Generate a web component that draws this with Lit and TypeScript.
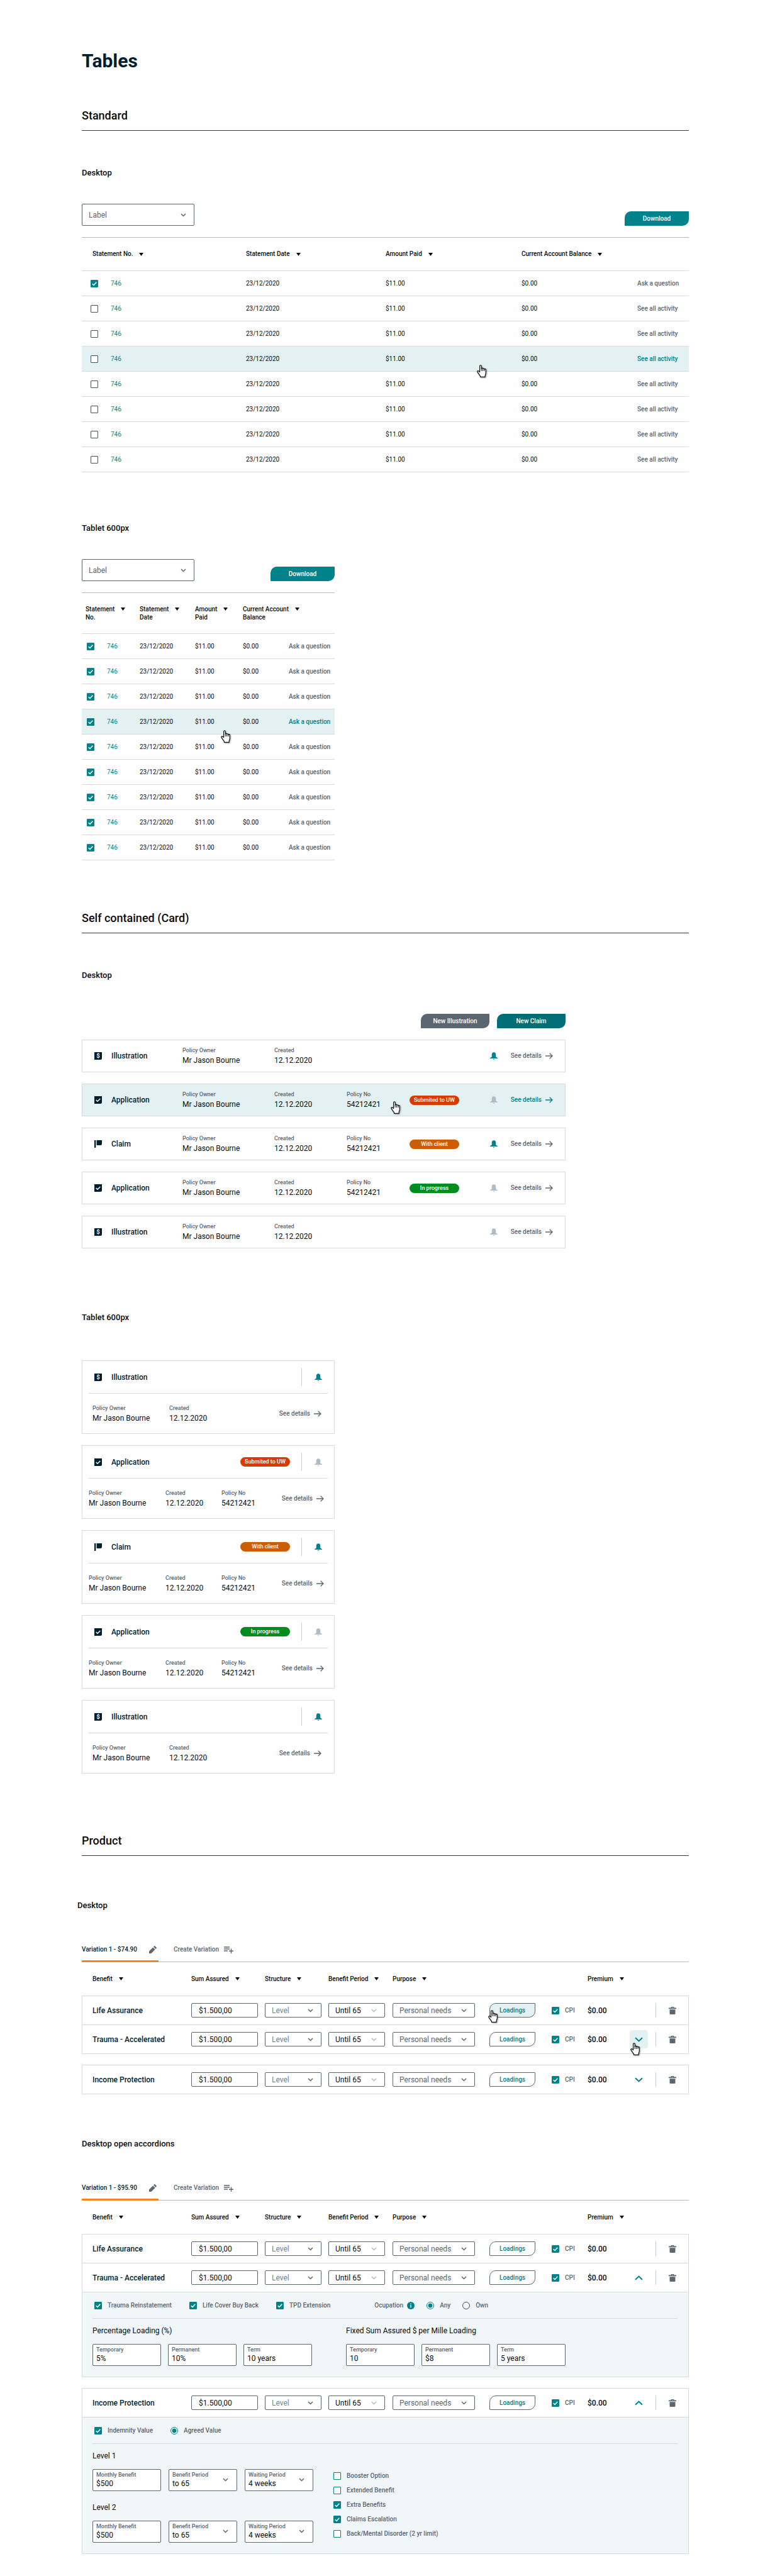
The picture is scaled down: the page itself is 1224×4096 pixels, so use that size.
import { LitElement, html, css, svg, nothing, type TemplateResult } from "lit";
import { customElement, property } from "lit/decorators.js";
import { classMap } from "lit/directives/class-map.js";

/* ---------- icons ---------- */

const icons: Record<string, TemplateResult> = {
  chevron: svg`<svg class="chevron" viewBox="0 0 9 6" width="9" height="6" aria-hidden="true"><path d="M1 1l3.5 3.5L8 1" fill="none" stroke="currentColor" stroke-width="1.5"/></svg>`,
  caret: svg`<svg viewBox="0 0 7 5" width="7" height="5" aria-hidden="true"><path d="M0 0h7L3.500 5z" fill="currentColor"/></svg>`,
  tick: svg`<svg class="tick" viewBox="0 0 12 12" width="12" height="12" aria-hidden="true"><path d="M2.700 6.200l2.300 2.300 4.300-4.700" fill="none" stroke="#fff" stroke-width="1.500"/></svg>`,
  expand: svg`<svg viewBox="0 0 13 8" width="13" height="8" aria-hidden="true"><path d="M1 1.200l5.500 5.200L12 1.200" fill="none" stroke="currentColor" stroke-width="2"/></svg>`,
  collapse: svg`<svg viewBox="0 0 13 8" width="13" height="8" aria-hidden="true"><path d="M1 6.800l5.500-5.200L12 6.800" fill="none" stroke="currentColor" stroke-width="2"/></svg>`,
  arrow: svg`<svg viewBox="0 0 12 10" width="12" height="10" aria-hidden="true"><path d="M0 5h10.800M6.700.700L11 5 6.700 9.300" fill="none" stroke="currentColor" stroke-width="1.300"/></svg>`,
  bell: svg`<svg viewBox="0 0 24 24" width="12" height="12" aria-hidden="true"><path d="M12 .500c-4 0-6.500 2.700-6.500 6.500v6.500c0 2-1.500 3.200-5.500 5V20h24v-1.500c-4-1.800-5.500-3-5.500-5V7c0-3.800-2.500-6.500-6.500-6.500zM9 21.500h6c-.4 1.500-1.500 2.300-3 2.300s-2.600-.8-3-2.300z" fill="currentColor"/></svg>`,
  trash: svg`<svg viewBox="0 0 12 12" width="12" height="12" aria-hidden="true"><path d="M3.600 1.600V0h4.800v1.600H12V3.200H0V1.600zM5 1.600h2V1H5zM1.500 4.200h9V10.800a1.200 1.200 0 0 1-1.200 1.200H2.700a1.200 1.200 0 0 1-1.200-1.200z" fill="currentColor"/></svg>`,
  pencil: svg`<svg viewBox="0 0 12 12" width="12" height="12" aria-hidden="true"><path d="M0 12V8.600L6.200 2.400l3.400 3.400L3.600 11.800q-.2.200-.6.200zM7 1.600L8.300.300q.5-.5 1 0l2.400 2.400q.5.500 0 1L10.400 5z" fill="currentColor"/></svg>`,
  listAdd: svg`<svg viewBox="0 0 15 11" width="15" height="11" aria-hidden="true"><path d="M0 1h9M0 4h9M0 7h6M11.500 3.500V11M8 7.200h7" fill="none" stroke="currentColor" stroke-width="1.400"/></svg>`,
  info: svg`<svg viewBox="0 0 12 12" width="12" height="12" role="img" aria-label="More about occupation"><circle cx="6" cy="6" r="6" fill="#00828a"/><path d="M6 2.600v1.500M6 5v4.400" stroke="#fff" stroke-width="1.300"/></svg>`,
  illustration: svg`<svg viewBox="0 0 12 12" width="12" height="12" aria-hidden="true"><path d="M0 0h12v9.500a2.500 2.500 0 0 1-2.500 2.500H0z" fill="currentColor"/><text x="6" y="9.200" text-anchor="middle" font-size="9" font-weight="700" fill="#fff">$</text></svg>`,
  application: svg`<svg viewBox="0 0 12 12" width="12" height="12" aria-hidden="true"><path d="M0 0h12v9.500a2.500 2.500 0 0 1-2.500 2.500H0z" fill="currentColor"/><path d="M2.700 6l2.300 2.300 4.300-4.300" fill="none" stroke="#fff" stroke-width="1.500"/></svg>`,
  claim: svg`<svg viewBox="0 0 12 12" width="12" height="12" aria-hidden="true"><path d="M0 0h2.300v12H0zM3.600 0H12v5.400A2.500 2.500 0 0 1 9.500 7.900H3.600z" fill="currentColor"/></svg>`,
  hand: svg`<svg viewBox="0 0 16 21" width="16" height="21" aria-hidden="true"><path d="M4.600 11.500V2.100a1.300 1.300 0 0 1 2.600 0V6.200a1.200 1.200 0 0 1 2.400.3v.3a1.200 1.200 0 0 1 2.400.3v.5a1.150 1.150 0 0 1 2.300.4v5.200c0 1.600-1.200 3-1.200 4.600v1.500H5.500v-1.300c-1.200-2-2.400-3.200-4.400-6.300-.8-1.500.7-2.500 1.700-1.700z" fill="#fff" stroke="#111" stroke-width="1.200" stroke-linejoin="round"/><path d="M7.200 6v4M9.600 6.800v3.200M12 7.500v2.700" stroke="#111" stroke-width="1"/></svg>`,
};

const hand = (spot: string) => html`<span class="hand ${spot}">${icons.hand}</span>`;

/* ---------- shared styles ---------- */

const base = css`
  :host {
    display: block;
    --teal: #00828a;
    --ink: #001f2e;
    --slate: #5c6670;
    --line: #d6dce1;
    --tint: #e4f1f2;
    color: #0b0b0b;
    font: 400 10px/14px Roboto, "Liberation Sans", sans-serif;
  }
  *,
  *::before {
    box-sizing: border-box;
  }
  svg {
    display: block;
    flex: none;
  }
  button,
  input,
  select {
    margin: 0;
    font: inherit;
    color: inherit;
  }
  button {
    padding: 0;
    border: 0;
    background: none;
    cursor: pointer;
  }
  a {
    color: inherit;
    text-decoration: none;
  }
  table {
    width: 100%;
    border-collapse: separate;
    border-spacing: 0;
    table-layout: fixed;
  }
  th,
  td {
    padding: 0;
    text-align: left;
    font-weight: 400;
  }
  .hand {
    position: absolute;
    z-index: 1;
    filter: drop-shadow(1px 1px 1px rgba(0, 0, 0, 0.4));
    pointer-events: none;
  }
  .sort {
    display: flex;
    align-items: center;
    gap: 10px;
    font-weight: 500;
    text-align: left;
    white-space: nowrap;
  }
  .solid {
    height: 23px;
    border-radius: 10px 1px;
    background: var(--teal);
    color: #fff;
    font-weight: 500;
  }
  .check {
    display: flex;
    align-items: center;
    gap: 9px;
    color: var(--slate);
    font-weight: 500;
    white-space: nowrap;
  }
  .box {
    display: grid;
    flex: none;
    width: 12px;
    height: 12px;
  }
  .box > * {
    grid-area: 1 / 1;
  }
  .box input {
    appearance: none;
    width: 12px;
    height: 12px;
    border: 1px solid #46505a;
    border-radius: 1px;
    background: #fff;
  }
  .box.accent input {
    border-color: var(--teal);
  }
  .box input:checked {
    border-color: var(--teal);
    background: var(--teal);
  }
  .box .tick {
    visibility: hidden;
    pointer-events: none;
  }
  .box input:checked + .tick {
    visibility: visible;
  }
  .box input[type="radio"] {
    border-radius: 50%;
    background: transparent;
  }
  .box input[type="radio"]:checked {
    background: radial-gradient(circle, var(--teal) 3px, #fff 4px);
  }
  .pick {
    display: grid;
    align-items: center;
    color: var(--slate);
  }
  .pick > * {
    grid-area: 1 / 1;
  }
  .pick select {
    appearance: none;
    width: 100%;
    min-width: 0;
    height: 23px;
    padding: 0 20px 0 10px;
    border: 1px solid var(--slate);
    border-radius: 2px;
    background: #fff;
    font-size: 12px;
  }
  .pick .chevron {
    justify-self: end;
    margin-right: 13px;
    pointer-events: none;
  }
`;

const tickBox = (checked: boolean, label: string, accent = false) =>
  html`<span class=${classMap({ box: true, accent })}
    ><input type="checkbox" .checked=${checked} aria-label=${label} />${icons.tick}</span
  >`;

const check = (text: string, checked: boolean, accent = false) =>
  html`<label class="check"
    ><span class=${classMap({ box: true, accent })}
      ><input type="checkbox" .checked=${checked} />${icons.tick}</span
    >${text}</label
  >`;

const radio = (text: string, name: string, checked: boolean) =>
  html`<label class="check"
    ><span class="box"><input type="radio" name=${name} .checked=${checked} /></span>${text}</label
  >`;

const sort = (text: TemplateResult | string) =>
  html`<button class="sort" type="button"><span>${text}</span>${icons.caret}</button>`;

/* ---------- statement table ---------- */

interface Statement {
  checked: boolean;
  action: string;
  hover?: boolean;
}

@customElement("statement-table")
class StatementTable extends LitElement {
  @property({ type: Boolean, reflect: true }) compact = false;
  @property({ attribute: false }) rows: Statement[] = [];

  static styles = [
    base,
    css`
      .bar {
        display: flex;
        justify-content: space-between;
        align-items: flex-end;
        margin-bottom: 18px;
      }
      .bar .pick {
        width: 179px;
      }
      .bar select {
        height: 35px;
      }
      .bar .solid {
        width: 102px;
      }
      table {
        border-top: 1px solid #b3bdc6;
      }
      th {
        height: 53px;
        border-bottom: 1px solid var(--line);
      }
      td {
        height: 40px;
        border-bottom: 1px solid var(--line);
      }
      .c-date {
        width: 222px;
      }
      .c-paid {
        width: 216px;
      }
      .c-balance {
        width: 184px;
      }
      .c-action {
        width: 82px;
      }
      th:first-child {
        padding-left: 17px;
      }
      .first {
        display: flex;
        align-items: center;
        gap: 20px;
        padding-left: 14px;
      }
      .first a {
        color: var(--teal);
      }
      .paid {
        position: relative;
      }
      .action {
        color: var(--slate);
        font-weight: 500;
        white-space: nowrap;
      }
      .hover td {
        background: var(--tint);
      }
      .hover .action {
        color: var(--teal);
      }
      .on-row {
        left: 145px;
        top: 29px;
      }
      :host([compact]) th {
        height: 65px;
      }
      :host([compact]) .sort {
        align-items: flex-start;
        line-height: 13px;
      }
      :host([compact]) .sort svg {
        margin-top: 4px;
      }
      :host([compact]) .c-date {
        width: 88px;
      }
      :host([compact]) .c-paid {
        width: 76px;
      }
      :host([compact]) .c-balance {
        width: 73px;
      }
      :host([compact]) .c-action {
        width: 73px;
      }
      :host([compact]) th:first-child {
        padding-left: 6px;
      }
      :host([compact]) .first {
        padding-left: 8px;
      }
      :host([compact]) .on-row {
        left: 41px;
        top: 33px;
      }
    `,
  ];

  render() {
    const titles = this.compact
      ? [html`Statement<br />No.`, html`Statement<br />Date`, html`Amount<br />Paid`, html`Current Account<br />Balance`]
      : ["Statement No.", "Statement Date", "Amount Paid", "Current Account Balance"];
    return html`
      <div class="bar">
        <span class="pick">
          <select aria-label="Label"><option>Label</option></select>${icons.chevron}
        </span>
        <button class="solid" type="button">Download</button>
      </div>
      <table>
        <colgroup>
          <col /><col class="c-date" /><col class="c-paid" /><col class="c-balance" /><col class="c-action" />
        </colgroup>
        <thead>
          <tr>
            ${titles.map((t, i) => html`<th colspan=${i === 3 ? 2 : 1} scope="col">${sort(t)}</th>`)}
          </tr>
        </thead>
        <tbody>
          ${this.rows.map(
            (r) => html`<tr class=${classMap({ hover: !!r.hover })}>
              <td><div class="first">${tickBox(r.checked, "Select statement")}<a href="#statement">746</a></div></td>
              <td>23/12/2020</td>
              <td class="paid">$11.00${r.hover ? hand("on-row") : nothing}</td>
              <td>$0.00</td>
              <td><a class="action" href="#activity">${r.action}</a></td>
            </tr>`
          )}
        </tbody>
      </table>
    `;
  }
}

/* ---------- policy cards ---------- */

interface Policy {
  kind: "Illustration" | "Application" | "Claim";
  status?: string;
  tone?: string;
  alert: boolean;
  hover?: boolean;
}

@customElement("policy-cards")
class PolicyCards extends LitElement {
  @property({ type: Boolean, reflect: true }) compact = false;
  @property({ attribute: false }) items: Policy[] = [];

  static styles = [
    base,
    css`
      .bar {
        display: flex;
        justify-content: flex-end;
        gap: 12px;
        margin-bottom: 18px;
      }
      .bar .solid {
        width: 109px;
        background: #006f75;
      }
      .bar .solid.grey {
        background: var(--slate);
      }
      .cards {
        display: grid;
        gap: 18px;
      }
      .card {
        border: 1px solid var(--line);
      }
      .row {
        display: grid;
        grid-template-columns: 27px 113px 146px 115px 100px 1fr 33px auto;
        align-items: center;
        height: 52px;
        padding: 0 19px;
      }
      .kind {
        color: var(--ink);
        font-size: 12px;
        font-weight: 500;
      }
      .icon {
        color: var(--ink);
      }
      .fact {
        display: grid;
        gap: 3px;
        margin: 0;
      }
      .fact dt {
        color: var(--slate);
        font-size: 9px;
        font-weight: 500;
        line-height: 11px;
      }
      .fact dd {
        margin: 0;
        font-size: 12px;
        line-height: 14px;
        white-space: nowrap;
      }
      .number {
        position: relative;
      }
      .pill {
        display: block;
        width: 79px;
        border-radius: 8px;
        color: #fff;
        font-size: 9px;
        font-weight: 500;
        line-height: 15px;
        text-align: center;
        white-space: nowrap;
      }
      .red {
        background: #d93a00;
      }
      .orange {
        background: #cb5d04;
      }
      .green {
        background: #008c1f;
      }
      .bell {
        color: #b1bbc5;
      }
      .bell.on {
        color: var(--teal);
      }
      .details {
        display: flex;
        align-items: center;
        gap: 6px;
        color: var(--slate);
        font-weight: 500;
        white-space: nowrap;
      }
      .hover {
        background: var(--tint);
      }
      .hover .details {
        color: var(--teal);
      }
      .on-card {
        left: 70px;
        top: 16px;
      }
      .head {
        display: flex;
        align-items: center;
        height: 51px;
        padding: 0 19px;
      }
      .head .icon {
        width: 27px;
      }
      .head .kind {
        flex: 1;
      }
      .head .bell {
        display: flex;
        align-items: center;
        height: 29px;
        margin-left: 18px;
        padding-left: 20px;
        border-left: 1px solid #c6ced6;
      }
      .foot {
        display: grid;
        grid-template-columns: 122px 1fr auto;
        align-items: center;
        height: 64px;
        margin: 0 10px;
        padding: 0 10px 0 6px;
        border-top: 1px solid var(--line);
      }
      .foot.wide {
        grid-template-columns: 122px 89px 1fr auto;
        padding: 0 6px 0 0;
      }
    `,
  ];

  private fact(term: string, value: string) {
    return html`<dl class="fact"><dt>${term}</dt><dd>${value}</dd></dl>`;
  }

  private bell(on: boolean) {
    return html`<button class=${classMap({ bell: true, on })} type="button" aria-label="Notifications">${icons.bell}</button>`;
  }

  private details() {
    return html`<a class="details" href="#details">See details ${icons.arrow}</a>`;
  }

  private pill(p: Policy) {
    return p.status ? html`<span class="pill ${p.tone}">${p.status}</span>` : nothing;
  }

  private wide(p: Policy) {
    return html`<article class=${classMap({ card: true, row: true, hover: !!p.hover })}>
      <span class="icon">${icons[p.kind.toLowerCase()]}</span>
      <span class="kind">${p.kind}</span>
      ${this.fact("Policy Owner", "Mr Jason Bourne")} ${this.fact("Created", "12.12.2020")}
      <div class="number">${p.status ? this.fact("Policy No", "54212421") : nothing}${p.hover ? hand("on-card") : nothing}</div>
      <div>${this.pill(p)}</div>
      ${this.bell(p.alert)} ${this.details()}
    </article>`;
  }

  private narrow(p: Policy) {
    return html`<article class="card">
      <div class="head">
        <span class="icon">${icons[p.kind.toLowerCase()]}</span>
        <span class="kind">${p.kind}</span>
        ${this.pill(p)} ${this.bell(p.alert)}
      </div>
      <div class=${classMap({ foot: true, wide: !!p.status })}>
        ${this.fact("Policy Owner", "Mr Jason Bourne")} ${this.fact("Created", "12.12.2020")}
        ${p.status ? this.fact("Policy No", "54212421") : nothing} ${this.details()}
      </div>
    </article>`;
  }

  render() {
    return html`
      ${this.compact
        ? nothing
        : html`<div class="bar">
            <button class="solid grey" type="button">New Illustration</button>
            <button class="solid" type="button">New Claim</button>
          </div>`}
      <div class="cards">${this.items.map((p) => (this.compact ? this.narrow(p) : this.wide(p)))}</div>
    `;
  }
}

/* ---------- product table ---------- */

@customElement("product-table")
class ProductTable extends LitElement {
  @property() total = "";
  @property({ type: Boolean }) open = false;

  static styles = [
    base,
    css`
      .tabs {
        display: flex;
        box-shadow: inset 0 -1px #b3bdc6;
      }
      .tab {
        display: flex;
        align-items: center;
        height: 30px;
        padding-bottom: 7px;
        border-bottom: 3px solid transparent;
        color: var(--slate);
        font-weight: 500;
        white-space: nowrap;
      }
      .tab.current {
        gap: 19px;
        padding-right: 3px;
        border-color: #fa811e;
      }
      .tab.current span {
        color: var(--ink);
      }
      .tab.create {
        gap: 8px;
        margin-left: 24px;
      }
      .c-sum {
        width: 117px;
      }
      .c-structure {
        width: 101px;
      }
      .c-period {
        width: 102px;
      }
      .c-purpose {
        width: 154px;
      }
      .c-loading {
        width: 99px;
      }
      .c-cpi {
        width: 57px;
      }
      .c-premium {
        width: 67px;
      }
      .c-toggle {
        width: 41px;
      }
      .c-delete {
        width: 53px;
      }
      thead th {
        height: 53px;
      }
      thead th:first-child {
        padding-left: 17px;
      }
      .item > * {
        position: relative;
        height: 46px;
        border-top: 1px solid var(--line);
      }
      .item > :first-child {
        padding-left: 16px;
        border-left: 1px solid var(--line);
        color: var(--ink);
        font-size: 12px;
        font-weight: 500;
      }
      .item > :last-child {
        border-right: 1px solid var(--line);
      }
      .item.last > * {
        height: 47px;
        border-bottom: 1px solid var(--line);
      }
      .gap td {
        height: 17px;
      }
      .sum,
      .structure {
        padding-right: 11px;
      }
      .period {
        padding-right: 12px;
      }
      .purpose {
        padding-right: 23px;
      }
      .sum input {
        display: block;
        width: 100%;
        height: 23px;
        padding: 0 11px;
        border: 1px solid var(--slate);
        border-radius: 2px;
        font-size: 12px;
      }
      .structure select {
        color: #78828c;
      }
      .period select {
        color: #0b0b0b;
      }
      .period .chevron {
        color: #b1bbc5;
      }
      .outline {
        display: block;
        width: 73px;
        height: 23px;
        border: 1px solid var(--slate);
        border-radius: 10px 1px;
        background: #fff;
        color: var(--teal);
        font-weight: 500;
      }
      .outline.hover {
        background: var(--tint);
      }
      .premium {
        font-size: 12px;
        font-weight: 500;
      }
      .toggle {
        display: grid;
        place-items: center;
        width: 29px;
        height: 29px;
        border-radius: 4px;
        color: var(--teal);
      }
      .toggle.hover {
        background: var(--tint);
      }
      .bin {
        display: flex;
        align-items: center;
        height: 23px;
        padding-left: 20px;
        border-left: 1px solid #c6ced6;
        color: var(--slate);
      }
      .on-loading {
        left: -2px;
        top: 22px;
      }
      .on-toggle {
        left: 1px;
        top: 28px;
      }
      .panel {
        padding: 0 17px 17px 16px;
        border: 1px solid var(--line);
        background: #f1f6f9;
      }
      .options {
        display: flex;
        align-items: center;
        gap: 28px;
        height: 42px;
        padding: 0 3px;
        border-bottom: 1px solid var(--line);
      }
      .occupation {
        display: flex;
        align-items: center;
        gap: 19px;
        margin-left: 42px;
      }
      .occupation .name {
        display: flex;
        align-items: center;
        gap: 6px;
        color: var(--slate);
        font-weight: 500;
      }
      .columns {
        display: flex;
        gap: 54px;
        padding-top: 11px;
      }
      .columns.levels {
        gap: 32px;
      }
      .stack {
        display: grid;
        gap: 18px;
      }
      h4 {
        margin: 0 0 13px;
        font-size: 12px;
        font-weight: 400;
        line-height: 16px;
      }
      .fields {
        display: flex;
        gap: 11px;
      }
      .levels .fields {
        gap: 12px;
      }
      .field {
        display: grid;
        grid-template-columns: 1fr auto;
        grid-template-rows: 11px 14px;
        row-gap: 1px;
        width: 109px;
        height: 35px;
        padding: 3px 13px 0 5px;
        border: 1px solid var(--slate);
        border-radius: 2px;
        background: #fff;
        color: var(--slate);
        font-size: 9px;
        font-weight: 500;
        line-height: 11px;
        white-space: nowrap;
      }
      .field input,
      .field select {
        grid-area: 2 / 1;
        appearance: none;
        width: 100%;
        min-width: 0;
        height: 14px;
        padding: 0;
        border: 0;
        background: none;
        color: #0b0b0b;
        font-size: 12px;
        font-weight: 400;
        line-height: 14px;
      }
      .field .chevron {
        grid-area: 1 / 2 / 3 / 3;
        align-self: center;
      }
      .list {
        display: grid;
        grid-auto-rows: 23px;
        align-content: start;
        padding-top: 28px;
      }
    `,
  ];

  private pick(label: string, value: string) {
    return html`<span class="pick"><select aria-label=${label}><option>${value}</option></select>${icons.chevron}</span>`;
  }

  private item(name: string, o: { last?: boolean; toggle?: boolean; hotLoading?: boolean; hotToggle?: boolean }) {
    return html`<tr class=${classMap({ item: true, last: !!o.last })}>
      <th scope="row">${name}</th>
      <td class="sum"><input type="text" aria-label="Sum Assured" .value=${"$1.500,00"} /></td>
      <td class="structure">${this.pick("Structure", "Level")}</td>
      <td class="period">${this.pick("Benefit Period", "Until 65")}</td>
      <td class="purpose">${this.pick("Purpose", "Personal needs")}</td>
      <td>
        <button class=${classMap({ outline: true, hover: !!o.hotLoading })} type="button">Loadings</button>${o.hotLoading
          ? hand("on-loading")
          : nothing}
      </td>
      <td>${check("CPI", true)}</td>
      <td class="premium">$0.00</td>
      <td>
        ${o.toggle
          ? html`<button class=${classMap({ toggle: true, hover: !!o.hotToggle })} type="button" aria-label="Toggle details">
              ${this.open ? icons.collapse : icons.expand}
            </button>`
          : nothing}${o.hotToggle ? hand("on-toggle") : nothing}
      </td>
      <td><button class="bin" type="button" aria-label="Delete">${icons.trash}</button></td>
    </tr>`;
  }

  private field(label: string, value: string, choice = false) {
    return html`<label class="field"
      >${label}${choice
        ? html`<select><option>${value}</option></select>${icons.chevron}`
        : html`<input type="text" .value=${value} />`}</label
    >`;
  }

  private loading(title: string, values: string[]) {
    return html`<section>
      <h4>${title}</h4>
      <div class="fields">${["Temporary", "Permanent", "Term"].map((l, i) => this.field(l, values[i]))}</div>
    </section>`;
  }

  private level(title: string) {
    return html`<section>
      <h4>${title}</h4>
      <div class="fields">
        ${this.field("Monthly Benefit", "$500")} ${this.field("Benefit Period", "to 65", true)}
        ${this.field("Waiting Period", "4 weeks", true)}
      </div>
    </section>`;
  }

  private traumaPanel() {
    return html`<tr>
      <td class="panel" colspan="10">
        <div class="options">
          ${check("Trauma Reinstatement", true)} ${check("Life Cover Buy Back", true)} ${check("TPD Extension", true)}
          <div class="occupation" role="radiogroup" aria-label="Ocupation">
            <span class="name">Ocupation ${icons.info}</span>
            ${radio("Any", "occupation", true)} ${radio("Own", "occupation", false)}
          </div>
        </div>
        <div class="columns">
          ${this.loading("Percentage Loading (%)", ["5%", "10%", "10 years"])}
          ${this.loading("Fixed Sum Assured $ per Mille Loading", ["10", "$8", "5 years"])}
        </div>
      </td>
    </tr>`;
  }

  private incomePanel() {
    return html`<tr>
      <td class="panel" colspan="10">
        <div class="options">${check("Indemnity Value", true)} ${radio("Agreed Value", "value", true)}</div>
        <div class="columns levels">
          <div class="stack">${this.level("Level 1")} ${this.level("Level 2")}</div>
          <div class="list">
            ${check("Booster Option", false, true)} ${check("Extended Benefit", false, true)}
            ${check("Extra Benefits", true, true)} ${check("Claims Escalation", true, true)}
            ${check("Back/Mental Disorder (2 yr limit)", false, true)}
          </div>
        </div>
      </td>
    </tr>`;
  }

  render() {
    return html`
      <nav class="tabs">
        <a class="tab current" href="#variation-1"><span>Variation 1 - ${this.total}</span>${icons.pencil}</a>
        <a class="tab create" href="#create">Create Variation ${icons.listAdd}</a>
      </nav>
      <table>
        <colgroup>
          <col /><col class="c-sum" /><col class="c-structure" /><col class="c-period" /><col class="c-purpose" />
          <col class="c-loading" /><col class="c-cpi" /><col class="c-premium" /><col class="c-toggle" /><col class="c-delete" />
        </colgroup>
        <thead>
          <tr>
            ${["Benefit", "Sum Assured", "Structure", "Benefit Period", "Purpose"].map((t) => html`<th scope="col">${sort(t)}</th>`)}
            <td colspan="2"></td>
            <th scope="col">${sort("Premium")}</th>
            <td colspan="2"></td>
          </tr>
        </thead>
        <tbody>
          ${this.item("Life Assurance", { hotLoading: !this.open })}
          ${this.item("Trauma - Accelerated", { last: !this.open, toggle: true, hotToggle: !this.open })}
          ${this.open ? this.traumaPanel() : nothing}
        </tbody>
        <tbody>
          <tr class="gap"><td colspan="10"></td></tr>
          ${this.item("Income Protection", { last: !this.open, toggle: true })} ${this.open ? this.incomePanel() : nothing}
        </tbody>
      </table>
    `;
  }
}

/* ---------- page ---------- */

const desktopRows: Statement[] = Array.from({ length: 8 }, (_, i) => ({
  checked: i === 0,
  action: i === 0 ? "Ask a question" : "See all activity",
  hover: i === 3,
}));

const tabletRows: Statement[] = Array.from({ length: 9 }, (_, i) => ({
  checked: true,
  action: "Ask a question",
  hover: i === 3,
}));

const policies: Policy[] = [
  { kind: "Illustration", alert: true },
  { kind: "Application", status: "Submited to UW", tone: "red", alert: false, hover: true },
  { kind: "Claim", status: "With client", tone: "orange", alert: true },
  { kind: "Application", status: "In progress", tone: "green", alert: false },
  { kind: "Illustration", alert: false },
];

const tabletPolicies: Policy[] = policies.map((p, i) => (i === 4 ? { ...p, alert: true } : p));

@customElement("app-root")
class AppRoot extends LitElement {
  static styles = [
    base,
    css`
      :host {
        background: #fff;
      }
      main {
        padding: 79px 129px 35px 130px;
      }
      h1,
      h2,
      h3 {
        margin: 0;
      }
      h1 {
        color: var(--ink);
        font-size: 30px;
        font-weight: 700;
        line-height: 36px;
      }
      h2 {
        margin-top: 57px;
        padding-bottom: 11px;
        border-bottom: 1px solid #3a3a3a;
        font-size: 18px;
        font-weight: 500;
        line-height: 24px;
      }
      h3 {
        margin: 57px 0 39px;
        font-size: 13px;
        font-weight: 500;
        line-height: 20px;
      }
      .again {
        margin-top: 79px;
      }
      .cards-section {
        margin-top: 80px;
      }
      .cards-title {
        margin-bottom: 51px;
      }
      .tablet-cards {
        margin: 100px 0 58px;
      }
      .product-section {
        margin-top: 95px;
      }
      .product-title {
        margin: 69px 0 50px;
      }
      .outdent {
        margin-left: -7px;
      }
      .tablet {
        max-width: 402px;
      }
      .medium {
        max-width: 769px;
      }
    `,
  ];

  render() {
    return html`<main>
      <h1>Tables</h1>

      <h2>Standard</h2>
      <h3>Desktop</h3>
      <statement-table .rows=${desktopRows}></statement-table>
      <h3 class="again">Tablet 600px</h3>
      <statement-table class="tablet" compact .rows=${tabletRows}></statement-table>

      <h2 class="cards-section">Self contained (Card)</h2>
      <h3 class="cards-title">Desktop</h3>
      <policy-cards class="medium" .items=${policies}></policy-cards>
      <h3 class="tablet-cards">Tablet 600px</h3>
      <policy-cards class="tablet" compact .items=${tabletPolicies}></policy-cards>

      <h2 class="product-section">Product</h2>
      <h3 class="product-title outdent">Desktop</h3>
      <product-table total="$74.90"></product-table>
      <h3 class="product-title">Desktop open accordions</h3>
      <product-table total="$95.90" open></product-table>
    </main>`;
  }
}
